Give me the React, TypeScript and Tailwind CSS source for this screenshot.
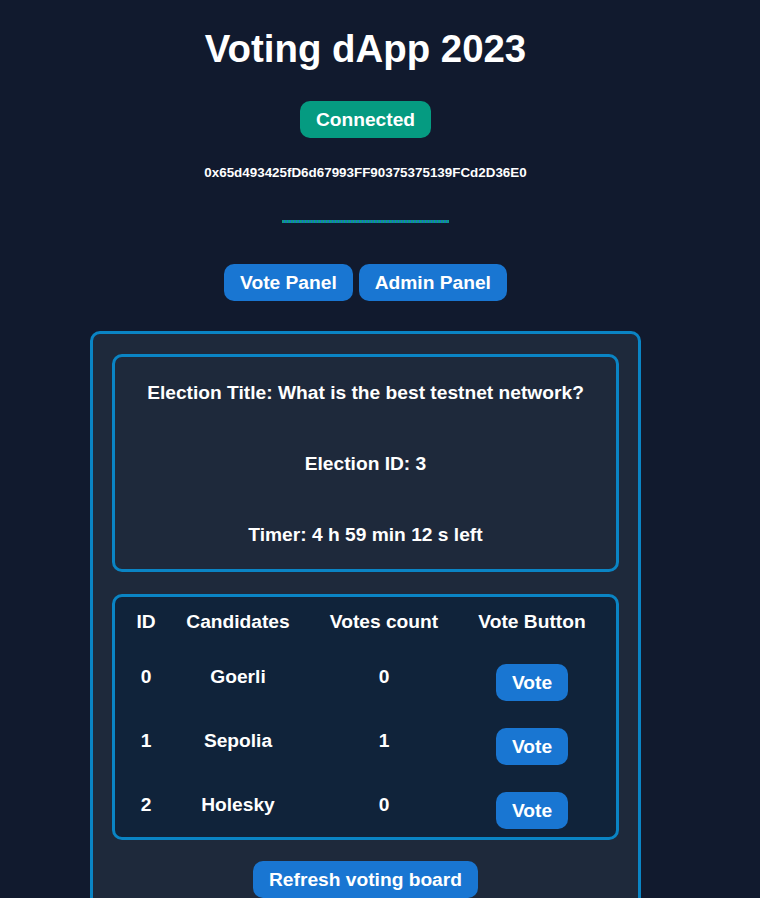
import React from "react";

const rows = [
  { id: 0, name: "Goerli", votes: 0 },
  { id: 1, name: "Sepolia", votes: 1 },
  { id: 2, name: "Holesky", votes: 0 },
];

function Btn({ children, className = "" }: { children: React.ReactNode; className?: string }) {
  return (
    <button
      className={
        "h-[37px] rounded-[10px] bg-[#1976d2] px-[16px] text-[19.2px] font-bold leading-[22px] text-white " +
        className
      }
    >
      {children}
    </button>
  );
}

export default function App() {
  return (
    <div className="h-[898px] w-full overflow-hidden bg-[#111a2e] font-['Liberation_Sans',Arial,sans-serif] text-white">
      <div className="flex w-[731px] flex-col items-center">
        <h1 className="mt-[27px] text-[38.4px] font-bold leading-[44px]">Voting dApp 2023</h1>
        <button className="mt-[30px] h-[37px] rounded-[10px] bg-[#059b81] px-[16px] text-[19.2px] font-bold leading-[22px] text-white">
          Connected
        </button>
        <div className="mt-[27px] text-[13.4px] font-bold leading-[15px]">
          0x65d493425fD6d67993FF90375375139FCd2D36E0
        </div>
        <div className="mt-[40px] h-[3px] w-[167px] bg-[repeating-linear-gradient(90deg,#0d9a86_0px,#0d9a86_2px,#1a6fc8_2px,#1a6fc8_3px)]" />
        <div className="mt-[41px] flex gap-[6px]">
          <Btn>Vote Panel</Btn>
          <Btn>Admin Panel</Btn>
        </div>
        <div className="mt-[30px] w-[551px] rounded-[10px] border-[3px] border-[#0a84c4] bg-[#1e293b] px-[19px] pb-[40px] pt-[20px]">
          <div className="flex h-[218px] flex-col items-center gap-[50px] rounded-[10px] border-[3px] border-[#0a84c4] pt-[25px] text-[19.2px] font-bold leading-[21px]">
            <div>Election Title: What is the best testnet network?</div>
            <div>Election ID: 3</div>
            <div>Timer: 4 h 59 min 12 s left</div>
          </div>
          <div className="mt-[22px] rounded-[10px] border-[3px] border-[#0a84c4] bg-[#10233a] pb-[8px] pt-[14px] text-[19.2px] font-bold leading-[21px]">
            <div className="grid h-[53px] grid-cols-[62px_122px_170px_126px] text-center">
              <div>ID</div>
              <div>Candidates</div>
              <div>Votes count</div>
              <div>Vote Button</div>
            </div>
            <div className="flex flex-col gap-[27px]">
              {rows.map((r) => (
                <div key={r.id} className="grid h-[37px] grid-cols-[62px_122px_170px_126px] items-start text-center">
                  <div className="pt-[2px]">{r.id}</div>
                  <div className="pt-[2px]">{r.name}</div>
                  <div className="pt-[2px]">{r.votes}</div>
                  <div className="flex justify-center">
                    <Btn>Vote</Btn>
                  </div>
                </div>
              ))}
            </div>
          </div>
          <div className="mt-[21px] flex justify-center">
            <Btn>Refresh voting board</Btn>
          </div>
        </div>
      </div>
    </div>
  );
}
